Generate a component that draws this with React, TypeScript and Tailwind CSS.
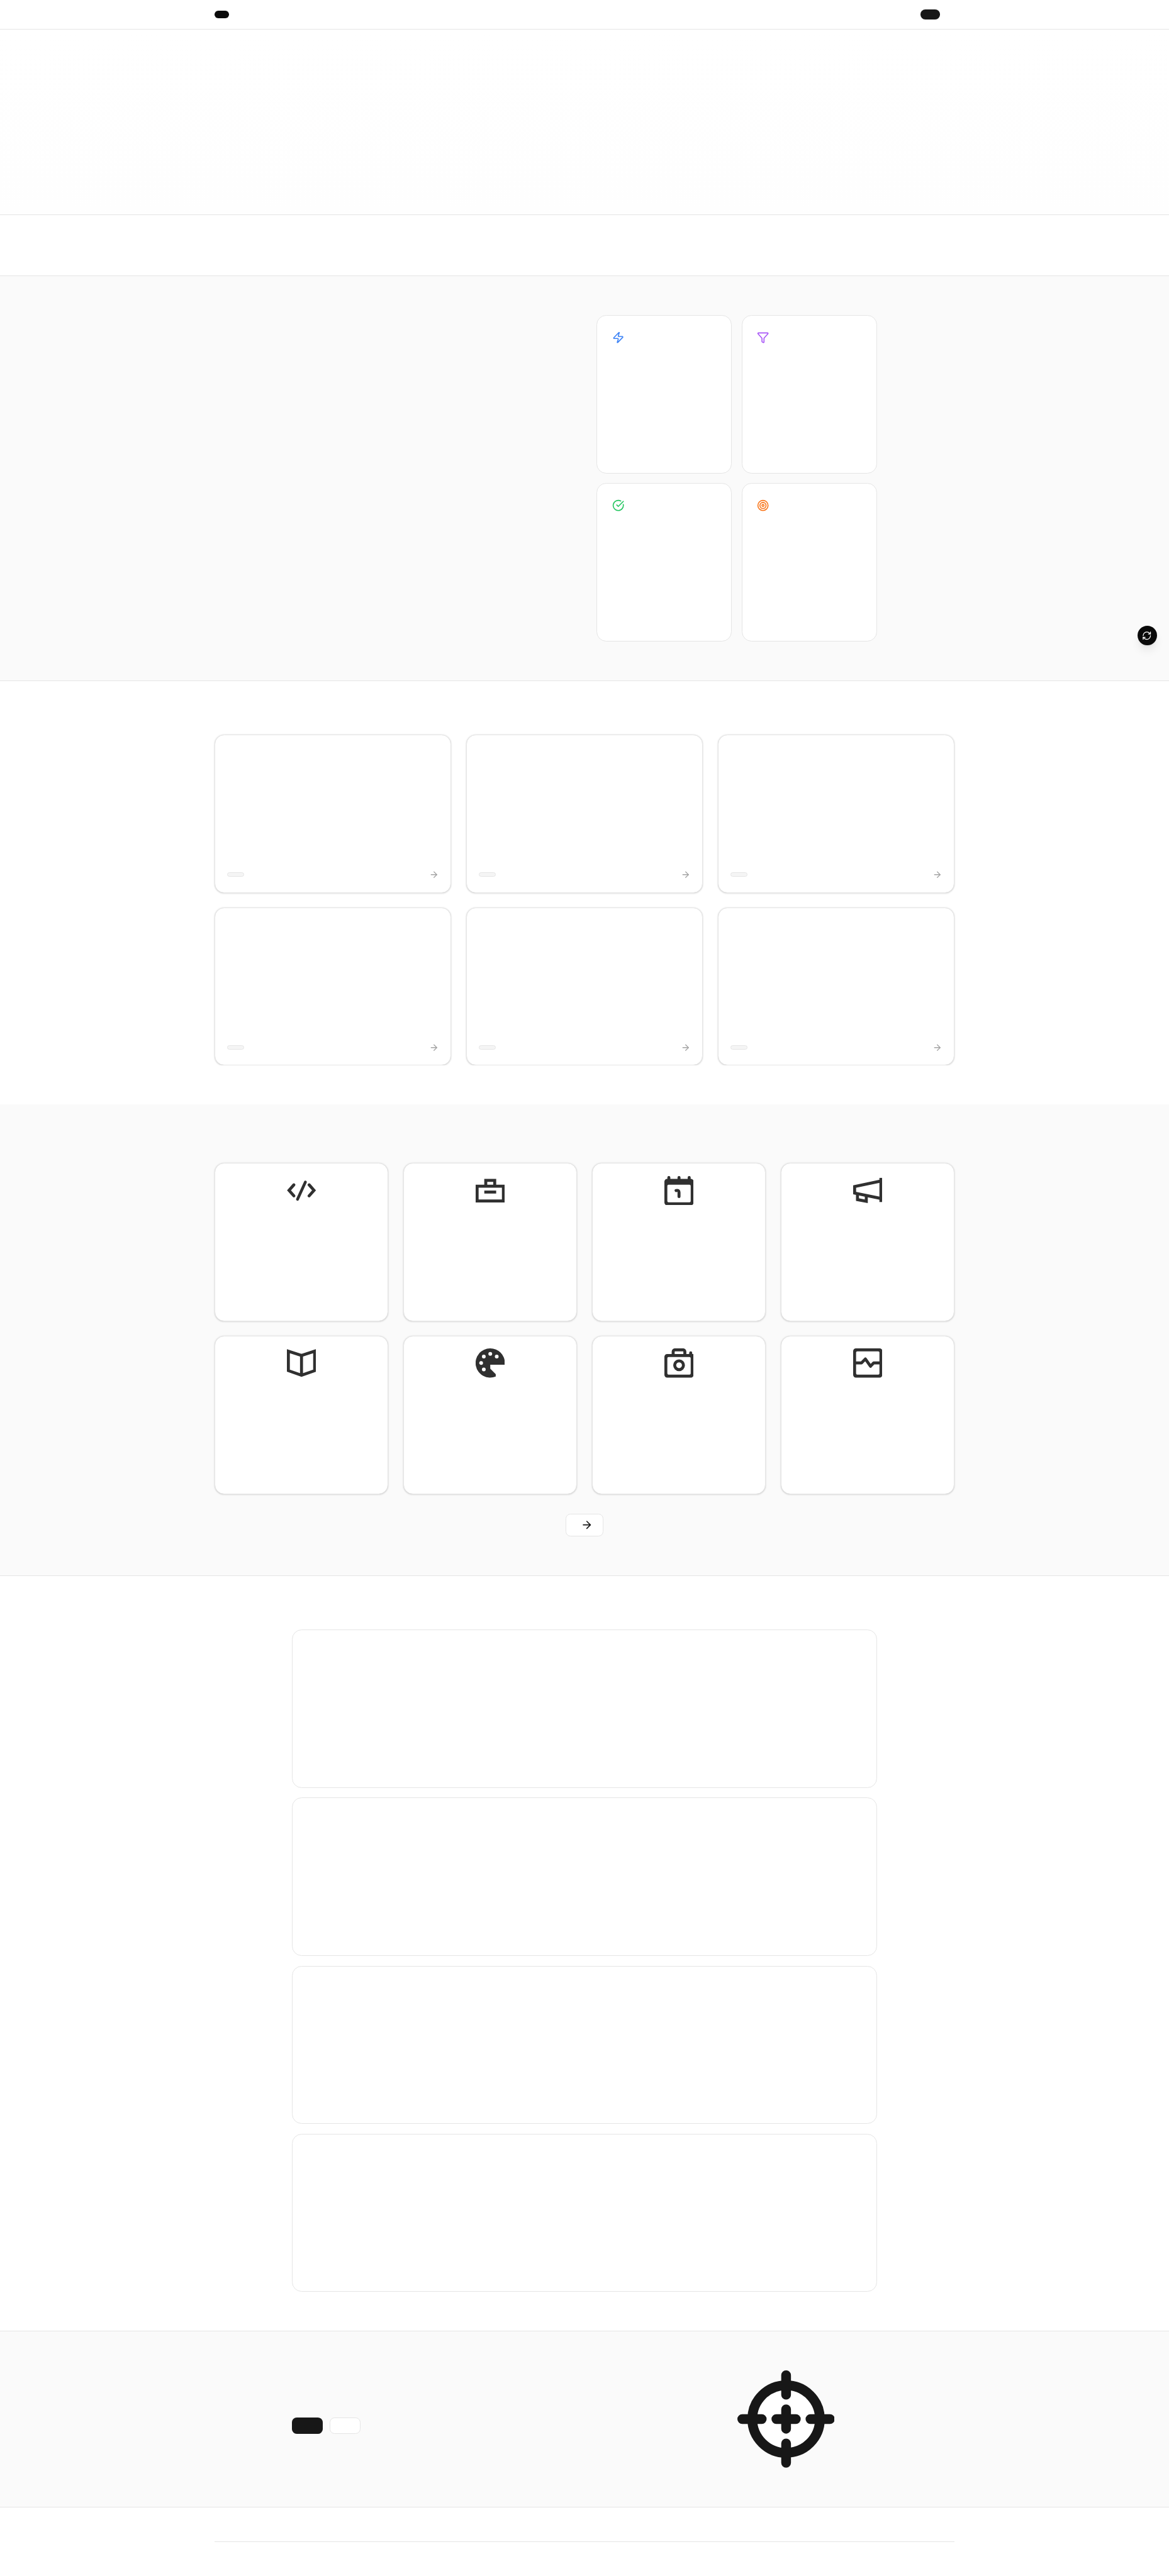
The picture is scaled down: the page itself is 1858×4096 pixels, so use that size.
import type { ReactNode } from "react";
import { ArrowRight, CircleCheckBig, Funnel, RefreshCw, Target, Zap } from "lucide-react";

const highlights: { id: string; icon: ReactNode }[] = [
  { id: "speed", icon: <Zap className="size-5 text-[#3b82f6]" /> },
  { id: "filter", icon: <Funnel className="size-5 text-[#a855f7]" /> },
  { id: "verified", icon: <CircleCheckBig className="size-5 text-[#22c55e]" /> },
  { id: "focus", icon: <Target className="size-5 text-[#f97316]" /> },
];

const categories: { id: string; drawing: ReactNode }[] = [
  {
    id: "code",
    drawing: (
      <g strokeLinecap="round">
        <path d="M11.5 14.4 3.5 23.5l8 9.1" />
        <path d="M36.5 14.4l8 9.1-8 9.1" />
        <path d="M30.4 9.8 17.4 38.2" strokeWidth="4.6" />
      </g>
    ),
  },
  {
    id: "briefcase",
    drawing: (
      <>
        <path d="M2.4 16.6h43.2v24.3H2.4z" />
        <path d="M16.6 16.6V7h14.7v9.6" />
        <path d="M14.2 26.3h19.5" />
      </>
    ),
  },
  {
    id: "calendar",
    drawing: (
      <>
        <path
          fill="currentColor"
          stroke="none"
          fillRule="evenodd"
          d="M4.5 4.6h39A4.5 4.5 0 0 1 48 9.1v34.4a4.5 4.5 0 0 1-4.5 4.5h-39A4.5 4.5 0 0 1 0 43.5V9.1A4.5 4.5 0 0 1 4.5 4.6ZM6.8 14.2a2 2 0 0 0-2 2v25a2 2 0 0 0 2 2h34.4a2 2 0 0 0 2-2v-25a2 2 0 0 0-2-2Z"
        />
        <g strokeLinecap="round">
          <path d="M7.3 2.4V8M24 2.4V8M40.7 2.4V8" />
          <path d="M19.2 23.9C22.5 22.9 24 24 24 27v6.8" />
        </g>
      </>
    ),
  },
  {
    id: "megaphone",
    drawing: (
      <>
        <path d="M45.6 8.2 2.4 17.3v10.6l43.2 8.9" />
        <path d="M45.6 3v39.7" />
        <path d="M7.1 29v9.7l14.5 2.8V32" />
      </>
    ),
  },
  {
    id: "book",
    drawing: <path d="M2.4 4.6 24 11.6l21.6-7v32L24 44.2 2.4 36.6ZM24 11.6v32.6" />,
  },
  {
    id: "palette",
    drawing: (
      <>
        <path
          fill="currentColor"
          stroke="none"
          d="M24 0a24 24 0 0 1 24 24v3H24v6.3l9 9.2v3.7A24 24 0 1 1 24 0Z"
        />
        <g fill="white" stroke="none">
          <circle cx="24" cy="9" r="3.1" />
          <circle cx="13.4" cy="13.4" r="3.1" />
          <circle cx="34.6" cy="13.4" r="3.1" />
          <circle cx="9" cy="24" r="3.1" />
          <circle cx="13.4" cy="34.6" r="3.1" />
        </g>
      </>
    ),
  },
  {
    id: "camera",
    drawing: (
      <>
        <path
          fill="currentColor"
          stroke="none"
          fillRule="evenodd"
          d="M4.5 9.4H48v34.1a4.5 4.5 0 0 1-4.5 4.5h-39A4.5 4.5 0 0 1 0 43.5V13.9a4.5 4.5 0 0 1 4.5-4.5ZM6.8 14.3a2 2 0 0 0-2 2v24.9a2 2 0 0 0 2 2h34.4a2 2 0 0 0 2-2V16.3a2 2 0 0 0-2-2Z"
        />
        <path d="M14.4 12V5.4a3 3 0 0 1 3-3h13.2a3 3 0 0 1 3 3V12" />
        <path d="M43.2 7.4V12" strokeLinecap="round" />
        <circle cx="24.1" cy="27.7" r="7.2" />
      </>
    ),
  },
  {
    id: "activity",
    drawing: (
      <>
        <path
          fill="currentColor"
          stroke="none"
          fillRule="evenodd"
          d="M4.5 0h39A4.5 4.5 0 0 1 48 4.5v39a4.5 4.5 0 0 1-4.5 4.5h-39A4.5 4.5 0 0 1 0 43.5v-39A4.5 4.5 0 0 1 4.5 0ZM6.8 4.8a2 2 0 0 0-2 2v34.4a2 2 0 0 0 2 2h34.4a2 2 0 0 0 2-2V6.8a2 2 0 0 0-2-2Z"
        />
        <path d="M4 24h9.7l6.4-6.6 8.4 12 5.2-5.4H44" strokeLinejoin="round" />
      </>
    ),
  },
];

function Header() {
  return (
    <header className="h-[49px] border-b border-[#e5e5e5] bg-white">
      <div className="mx-auto flex h-full max-w-7xl items-center justify-between pr-14 pl-8">
        <span className="h-3 w-6 rounded-[6px] bg-[#0a0a0a]" />
        <button className="h-4 w-8 rounded-[8px] bg-[#171717]" aria-label="Menu" />
      </div>
    </header>
  );
}

function Highlights() {
  return (
    <section className="border-b border-[#e5e5e5] bg-[#fafafa] py-16">
      <div className="mx-auto grid max-w-5xl grid-cols-2 gap-10 px-8">
        <div />
        <div className="grid grid-cols-2 gap-4">
          {highlights.map((item) => (
            <div
              key={item.id}
              className="h-[260px] rounded-2xl border border-[#e5e5e5] bg-white px-6 py-[26px]"
            >
              {item.icon}
            </div>
          ))}
        </div>
      </div>
    </section>
  );
}

function Listings() {
  return (
    <section className="pt-16 pb-16">
      <div className="mx-auto max-w-7xl overflow-hidden px-8 pt-6">
        <div className="grid grid-cols-3 gap-6">
          {[0, 1, 2, 3, 4, 5].map((n) => (
            <article
              key={n}
              className="flex h-[260px] items-end justify-between rounded-2xl border border-[#e5e5e5] bg-white px-5 pb-[21px] shadow-sm"
            >
              <div className="flex h-4 w-full items-center justify-between">
                <span className="h-[7px] w-7 rounded-full border border-[#e5e5e5] bg-[#f5f5f5]" />
                <ArrowRight className="size-4 text-[#a3a3a3]" />
              </div>
            </article>
          ))}
        </div>
      </div>
    </section>
  );
}

function Categories() {
  return (
    <section className="flex flex-col items-center border-b border-[#e5e5e5] bg-[#fafafa] pt-24 pb-16">
      <div className="grid w-full max-w-7xl grid-cols-4 gap-6 px-8">
        {categories.map((item) => (
          <article
            key={item.id}
            className="flex h-[260px] justify-center rounded-2xl border border-[#e5e5e5] bg-white pt-5 shadow-sm"
          >
            <svg
              viewBox="0 0 48 48"
              className="size-12 text-[#303030]"
              fill="none"
              stroke="currentColor"
              strokeWidth="4.9"
            >
              {item.drawing}
            </svg>
          </article>
        ))}
      </div>
      <button
        aria-label="Browse all"
        className="mt-8 flex h-[38px] w-[62px] items-center justify-end rounded-lg border border-[#e5e5e5] bg-white px-4"
      >
        <ArrowRight className="size-5 text-[#171717]" />
      </button>
    </section>
  );
}

function Questions() {
  return (
    <section className="pt-22 pb-16">
      <div className="mx-auto flex max-w-5xl flex-col gap-4 px-8">
        {[0, 1, 2, 3].map((n) => (
          <div key={n} className="h-[260px] rounded-2xl border border-[#e5e5e5] bg-white" />
        ))}
      </div>
    </section>
  );
}

function CallToAction() {
  return (
    <section className="border-y border-[#e5e5e5] bg-[#fafafa] py-16">
      <div className="mx-auto grid max-w-5xl grid-cols-[2fr_1fr] items-center gap-16 px-8">
        <div className="flex gap-3 pt-[22px]">
          <button aria-label="Start" className="h-[26px] w-[50px] rounded-lg bg-[#171717]" />
          <button
            aria-label="Learn more"
            className="h-[26px] w-[50px] rounded-lg border border-[#e5e5e5] bg-white"
          />
        </div>
        <svg
          viewBox="0 0 20 20"
          className="size-40 justify-self-center text-[#171717]"
          fill="none"
          stroke="currentColor"
          strokeWidth="2"
          strokeLinecap="round"
        >
          <circle cx="10" cy="10" r="6.94" fill="white" />
          <path d="M10 1v4M10 8v4M10 15v4M1 10h4M8 10h4M15 10h4" />
        </svg>
      </div>
    </section>
  );
}

export default function App() {
  return (
    <div className="relative h-[4233px] w-[1920px] overflow-hidden bg-white font-['Inter',sans-serif] [zoom:0.96771]">
      <Header />
      <section className="h-[304px] border-b border-[#e5e5e5] bg-linear-to-b from-white to-[#fefefe]" />
      <section className="h-[101px] border-b border-[#e5e5e5] bg-white" />
      <Highlights />
      <Listings />
      <Categories />
      <Questions />
      <CallToAction />
      <footer className="mx-auto max-w-7xl px-8 pt-14">
        <div className="h-[57px] border-t border-[#e5e5e5]" />
      </footer>
      <button
        aria-label="Refresh"
        className="absolute top-[1028px] right-5 flex size-8 items-center justify-center rounded-full bg-[#0a0a0a] text-white shadow-lg"
      >
        <RefreshCw className="size-4" />
      </button>
    </div>
  );
}
